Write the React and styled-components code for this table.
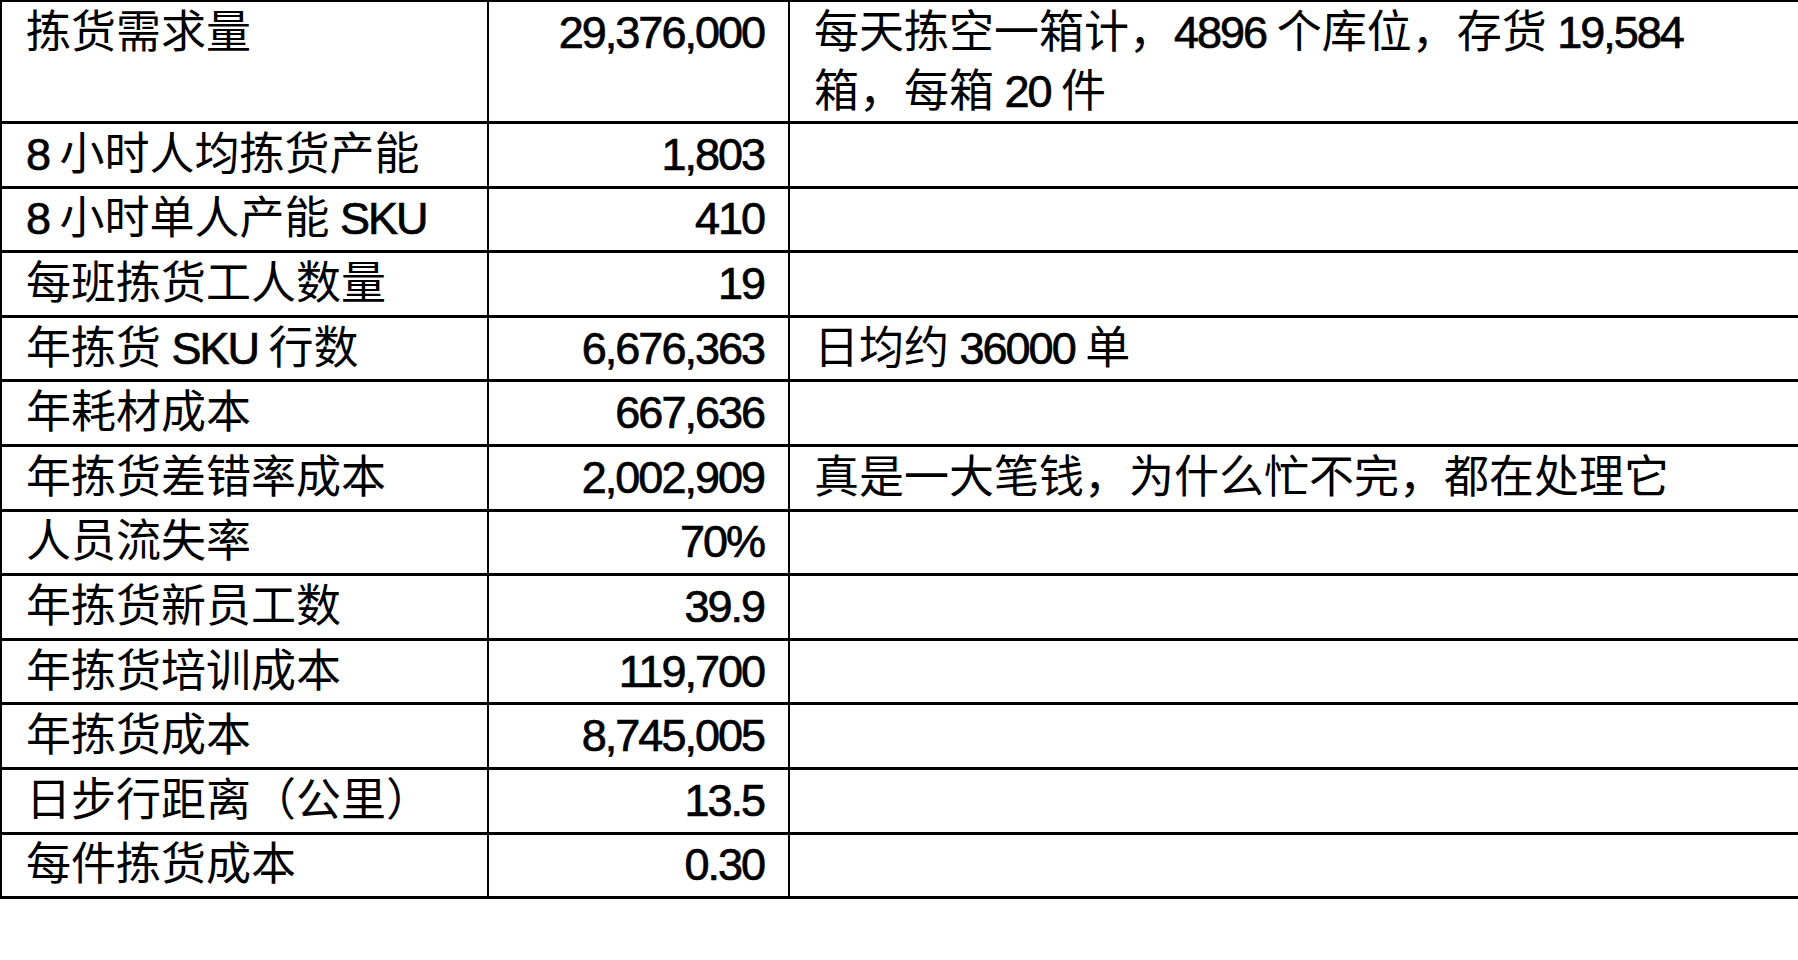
import React from 'react';
import styled, {createGlobalStyle} from 'styled-components';

let Global = createGlobalStyle`
  html, body {
    margin: 0;
    padding: 0;
    background: #fff;
  }
  body {
    width: 1798px;
    height: 960px;
    overflow: hidden;
    font-family: "Liberation Sans", "Noto Sans CJK SC", sans-serif;
    color: #000;
  }
`

let Table = styled.table`
  width: 1798px;
  border-collapse: collapse;
  table-layout: fixed;
  border-top: 2px solid #000;
  border-left: 2px solid #000;
`

let Row = styled.tr`
  height: ${props => props.tall ? '121px' : '64.6px'};
`

let Cell = styled.td`
  border-bottom: 3px solid #000;
  border-right: 2px solid #000;
  padding: ${props => props.tall ? '1px 24px 0' : '0 24px'};
  vertical-align: ${props => props.tall ? 'top' : 'middle'};
  font-size: 45px;
  line-height: ${props => props.tall ? '59px' : '60px'};
  white-space: nowrap;
  text-align: ${props => props.num ? 'right' : 'left'};
  &:last-child {
    border-right: none;
  }
`

let Latin = styled.span`
  letter-spacing: -2px;
  -webkit-text-stroke: 0.7px #000;
`

// wrap ascii runs (digits, SKU...) so they get the tighter, heavier look
let Text = ({value}) => {
  if (!value) return null
  let parts = value.split(/([\x00-\x7F]+)/)
  return parts.map((p, i) => (/[\x00-\x7F]/.test(p) ? <Latin key={i}>{p}</Latin> : p))
}

let rows = [
  ['拣货需求量', '29,376,000', null],
  ['8 小时人均拣货产能', '1,803', ''],
  ['8 小时单人产能 SKU', '410', ''],
  ['每班拣货工人数量', '19', ''],
  ['年拣货 SKU 行数', '6,676,363', '日均约 36000 单'],
  ['年耗材成本', '667,636', ''],
  ['年拣货差错率成本', '2,002,909', '真是一大笔钱，为什么忙不完，都在处理它'],
  ['人员流失率', '70%', ''],
  ['年拣货新员工数', '39.9', ''],
  ['年拣货培训成本', '119,700', ''],
  ['年拣货成本', '8,745,005', ''],
  ['日步行距离（公里）', '13.5', ''],
  ['每件拣货成本', '0.30', ''],
]

const App = () => {
  return (
    <>
      <Global/>
      <Table>
        <colgroup>
          <col style={{width: '487px'}}/>
          <col style={{width: '301px'}}/>
          <col/>
        </colgroup>
        <tbody>
        {rows.map((r, i) => {
          let tall = i === 0 ? 1 : 0
          return (
            <Row key={i} tall={tall}>
              <Cell tall={tall}><Text value={r[0]}/></Cell>
              <Cell tall={tall} num={1}><Text value={r[1]}/></Cell>
              <Cell tall={tall}>
                {r[2] === null ? (
                  <>
                    <Text value="每天拣空一箱计，4896 个库位，存货 19,584"/>
                    <br/>
                    <Text value="箱，每箱 20 件"/>
                  </>
                ) : <Text value={r[2]}/>}
              </Cell>
            </Row>
          )
        })}
        </tbody>
      </Table>
    </>
  );
};

export default App;
